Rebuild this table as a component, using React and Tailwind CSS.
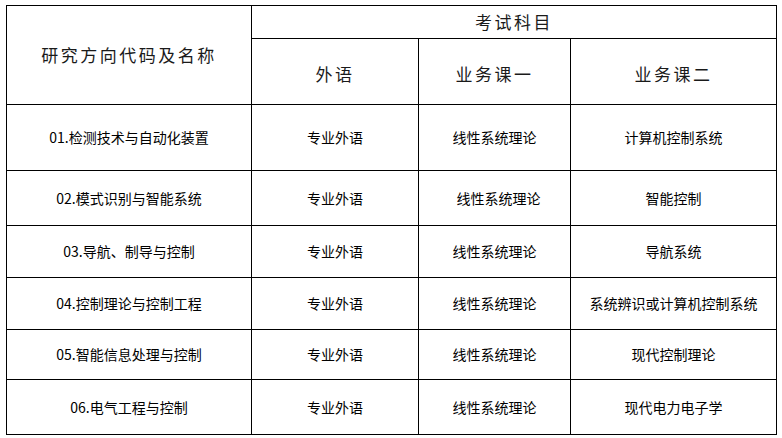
import React from 'react';

const rows = [
  { name: '01.检测技术与自动化装置', lang: '专业外语', c1: '线性系统理论', c2: '计算机控制系统', h: 'h-[66px]' },
  { name: '02.模式识别与智能系统', lang: '专业外语', c1: '线性系统理论', c2: '智能控制', h: 'h-[55px]', shift: true },
  { name: '03.导航、制导与控制', lang: '专业外语', c1: '线性系统理论', c2: '导航系统', h: 'h-[52px]' },
  { name: '04.控制理论与控制工程', lang: '专业外语', c1: '线性系统理论', c2: '系统辨识或计算机控制系统', h: 'h-[52px]' },
  { name: '05.智能信息处理与控制', lang: '专业外语', c1: '线性系统理论', c2: '现代控制理论', h: 'h-[50px]' },
  { name: '06.电气工程与控制', lang: '专业外语', c1: '线性系统理论', c2: '现代电力电子学', h: 'h-[55px]' },
];

export default function App() {
  const cell = 'border border-black text-center align-middle p-0';
  return (
    <div className="w-[782px] h-[438px] bg-white pt-[5px] pl-[6px] font-['Noto_Sans_CJK_SC',sans-serif] text-black">
      <table className="table-fixed border-collapse w-[771px]">
        <colgroup>
          <col className="w-[245px]" />
          <col className="w-[167px]" />
          <col className="w-[152px]" />
          <col className="w-[206px]" />
        </colgroup>
        <thead>
          <tr className="h-[33px]">
            <th rowSpan={2} className={`${cell} font-normal text-[17px] tracking-[2.5px] text-[#1a1a1a]`}>研究方向代码及名称</th>
            <th colSpan={3} className={`${cell} font-normal text-[17px] tracking-[2.5px] text-[#1a1a1a]`}>考试科目</th>
          </tr>
          <tr className="h-[66px]">
            <th className={`${cell} font-normal text-[17px] tracking-[2.5px] text-[#1a1a1a] pt-[4px]`}>外语</th>
            <th className={`${cell} font-normal text-[17px] tracking-[2.5px] text-[#1a1a1a] pt-[4px]`}>业务课一</th>
            <th className={`${cell} font-normal text-[17px] tracking-[2.5px] text-[#1a1a1a] pt-[4px]`}>业务课二</th>
          </tr>
        </thead>
        <tbody className="text-[14px]">
          {rows.map((r) => (
            <tr key={r.name} className={r.h}>
              <td className={cell}>{r.name}</td>
              <td className={cell}>{r.lang}</td>
              <td className={`${cell} ${r.shift ? 'pl-[8px]' : ''}`}>{r.c1}</td>
              <td className={cell}>{r.c2}</td>
            </tr>
          ))}
        </tbody>
      </table>
    </div>
  );
}
